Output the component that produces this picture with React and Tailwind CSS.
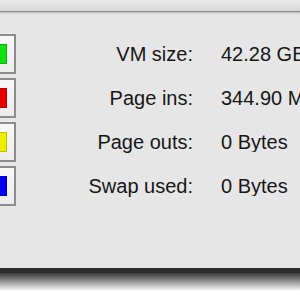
const rows = [
  { label: "VM size:", value: "42.28 GB", color: "bg-[#10e010]" },
  { label: "Page ins:", value: "344.90 MB", color: "bg-[#e80000]" },
  { label: "Page outs:", value: "0 Bytes", color: "bg-[#eeee00]" },
  { label: "Swap used:", value: "0 Bytes", color: "bg-[#0000f0]" },
];

const Swatch = ({ color }) => (
  <div className="w-[16px] h-[40px] overflow-hidden flex justify-end shrink-0">
    <div className="w-[32px] h-[40px] shrink-0 border-2 border-[#8c8c8c] bg-gradient-to-b from-[#f8f8f8] to-[#ececec] flex items-center justify-end pr-[7px]">
      <div className={`w-[20px] h-[20px] border border-black/20 ${color}`} />
    </div>
  </div>
);

const App = () => {
  return (
    <div
      className="w-[300px] h-[300px] bg-white flex flex-col overflow-hidden text-[#161616]"
      style={{ fontFamily: '"Liberation Sans", Arial, sans-serif' }}
    >
      {/* title bar remnant */}
      <div className="h-[11px] shrink-0 bg-gradient-to-b from-[#ececec] to-[#d6d6d6]" />
      <div className="h-[1px] shrink-0 bg-[#8a8a8a]" />
      <div className="h-[2px] shrink-0 bg-gradient-to-b from-[#bdbdbd] to-[#dedede]" />

      <div className="h-[254px] shrink-0 bg-[#e6e6e6] pt-[20px] flex flex-col gap-[4px]">
        {rows.map((row) => (
          <div key={row.label} className="flex items-center h-[40px]">
            <Swatch color={row.color} />
            <div className="w-[177px] shrink-0 text-right text-[20px] leading-none whitespace-nowrap">
              {row.label}
            </div>
            <div className="ml-[28px] min-w-0 overflow-hidden text-[20px] leading-none whitespace-nowrap">
              {row.value}
            </div>
          </div>
        ))}
      </div>

      {/* window shadow */}
      <div className="h-[5px] shrink-0 bg-[#2c2c2c]" />
      <div className="h-[18px] shrink-0 bg-gradient-to-b from-[#3c3c3c] via-[#9a9a9a] to-white" />
      <div className="flex-1 bg-white" />
    </div>
  );
};

export default App;
